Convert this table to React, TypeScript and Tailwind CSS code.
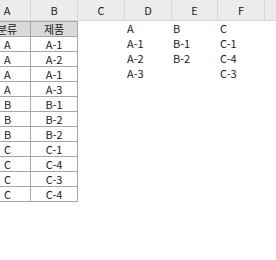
import React from "react";

const rows: [string, string][] = [
  ["A", "A-1"],
  ["A", "A-2"],
  ["A", "A-1"],
  ["A", "A-3"],
  ["B", "B-1"],
  ["B", "B-2"],
  ["B", "B-2"],
  ["C", "C-1"],
  ["C", "C-4"],
  ["C", "C-3"],
  ["C", "C-4"],
];

const d = ["A", "A-1", "A-2", "A-3"];
const e = ["B", "B-1", "B-2"];
const f = ["C", "C-1", "C-4", "C-3"];

const font = { fontFamily: '"Noto Sans CJK KR", "Noto Sans", sans-serif' };

export default function App() {
  const headers = ["A", "B", "C", "D", "E", "F"];
  const widths = ["w-[47px] -ml-[16px]", "w-[47px]", "w-[47px]", "w-[47px]", "w-[46px]", "w-[47px]"];
  return (
    <div className="w-[276px] h-[260px] bg-white overflow-hidden text-[11px] text-[#1a1a1a]" style={font}>
      <div className="flex h-[21px] bg-[#ececec] border-b border-[#d6d6d6]">
        {headers.map((h, i) => (
          <div
            key={h}
            className={`${widths[i]} shrink-0 flex items-center justify-center border-r border-[#d8d8d8] leading-none`}
          >
            {h}
          </div>
        ))}
        <div className="flex-1" />
      </div>
      {[["분류", "제품"] as [string, string], ...rows].map((r, i) => {
        const isHead = i === 0;
        const last = i === rows.length;
        const dataIdx = i;
        return (
          <div key={i} className="flex h-[15px] leading-none">
            <div
              className={`w-[47px] -ml-[16px] shrink-0 flex items-center border-t border-r border-[#a6a6a6] ${
                last ? "border-b h-[16px]" : ""
              } ${isHead ? "bg-[#dadada] justify-center" : "pl-[20px]"}`}
            >
              {r[0]}
            </div>
            <div
              className={`w-[47px] shrink-0 flex items-center justify-center border-t border-r border-[#a6a6a6] ${
                last ? "border-b h-[16px]" : ""
              } ${isHead ? "bg-[#dadada]" : ""}`}
            >
              {r[1]}
            </div>
            <div className="w-[47px] shrink-0" />
            <div className="w-[47px] shrink-0 flex items-center pl-[2px]">{d[dataIdx] ?? ""}</div>
            <div className="w-[46px] shrink-0 flex items-center pl-[1px]">{e[dataIdx] ?? ""}</div>
            <div className="w-[47px] shrink-0 flex items-center pl-[2px]">{f[dataIdx] ?? ""}</div>
          </div>
        );
      })}
    </div>
  );
}
